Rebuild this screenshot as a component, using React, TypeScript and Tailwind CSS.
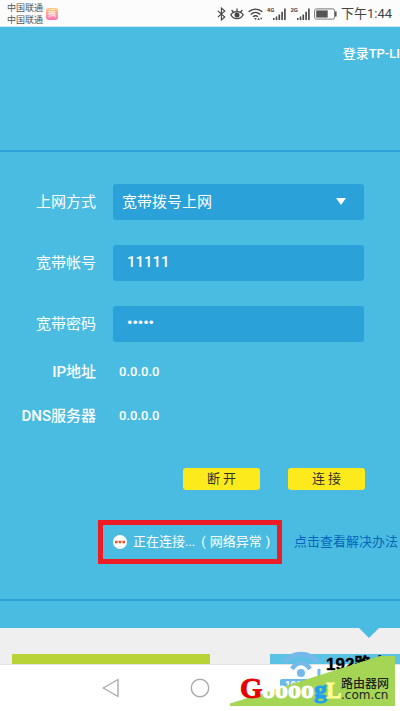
import { useState } from "react";

function BluetoothIcon() {
  return (
    <svg viewBox="0 0 9 14" className="h-3.5 w-[9px]" fill="none" stroke="#444" strokeWidth="1.1">
      <path d="M0.8 3.8 7.8 10 4.4 13V1L7.8 4 0.8 10.2" />
    </svg>
  );
}

function EyeIcon() {
  return (
    <svg viewBox="0 0 14 14" className="size-3.5" fill="none" stroke="#444" strokeWidth="1.3">
      <path d="M0.8 7.8C3.6 3.6 10.4 3.6 13.2 7.8 10.4 13 3.6 13 0.8 7.8Z" />
      <path d="M7 4.5V1.5M3.5 5.2 1.6 3M10.5 5.2 12.4 3" />
      <circle cx="7" cy="8" r="2.5" fill="#444" stroke="none" />
    </svg>
  );
}

function WifiIcon() {
  return (
    <svg viewBox="0 0 15 14" className="h-3.5 w-[15px]" fill="none" stroke="#444" strokeWidth="1.4">
      <path d="M0.6 4.8C4.6 1.2 10.4 1.2 14.4 4.8M2.8 7.4C5.6 4.9 9.4 4.9 12.2 7.4M5 9.8C6.6 8.4 8.4 8.4 10 9.8" />
      <path d="M6.2 11h2.6l-1.3 2ZM9.4 13l1.2-2.2 1.2 2.2ZM12 10.8h2.4l-1.2 2Z" fill="#444" stroke="none" />
    </svg>
  );
}

function SignalIcon({ label }: { label: string }) {
  return (
    <span className="flex items-start">
      <span className="text-[6px] leading-[6px] font-bold">{label}</span>
      <svg viewBox="0 0 13 14" className="-ml-px h-3.5 w-[13px]" fill="#444">
        <path d="M0 11h1.5v2H0ZM2.7 9.5h1.6V13H2.7ZM5.5 7.5h1.6V13H5.5ZM8.3 4.8h1.6V13H8.3ZM11.1 1.5h1.6V13h-1.6Z" />
      </svg>
    </span>
  );
}

function BatteryIcon() {
  return (
    <svg viewBox="0 0 23 12" className="h-3 w-[23px]">
      <rect x="0.6" y="0.9" width="20" height="10.2" rx="1.8" fill="#fff" stroke="#777" strokeWidth="1" />
      <rect x="2.2" y="2.4" width="11.5" height="7.2" fill="#555" />
      <path d="M21 3.5h1.6v5H21Z" fill="#555" />
    </svg>
  );
}

function StatusBar() {
  return (
    <header className="flex h-[27px] items-center justify-between border-b border-[#cfe6ee] bg-[#fcfcfc] pt-0.5 pr-2 pl-[7px] text-[#444]">
      <div className="flex items-center gap-[3px]">
        <div className="text-[9px] leading-3 text-[#555]">
          <p>中国联通</p>
          <p>中国联通</p>
        </div>
        <span className="flex size-3 items-center justify-center rounded-[3px] bg-linear-to-b from-[#ffc96b] to-[#ff6fb5] text-[8px] leading-none text-white">
          搞
        </span>
      </div>
      <div className="flex items-center gap-1">
        <BluetoothIcon />
        <EyeIcon />
        <WifiIcon />
        <SignalIcon label="4G" />
        <SignalIcon label="2G" />
        <BatteryIcon />
        <span className="text-[13px] leading-4">下午1:44</span>
      </div>
    </header>
  );
}

const labelClass = "text-right text-[15px] leading-6 whitespace-nowrap";
const fieldClass = "block h-9 w-full rounded-[3px] bg-[#2ba1da] text-[15px] text-white outline-none";

function DialForm() {
  const [mode, setMode] = useState("pppoe");
  const [account, setAccount] = useState("11111");
  const [password, setPassword] = useState("12345");

  return (
    <form onSubmit={(e) => e.preventDefault()} className="pt-8 pb-[35px]">
      <div className="grid grid-cols-[96px_1fr] items-center gap-x-[17px] gap-y-[25px] pr-9">
        <label htmlFor="mode" className={labelClass}>
          上网方式
        </label>
        <div className="relative">
          <select
            id="mode"
            value={mode}
            onChange={(e) => setMode(e.target.value)}
            className={`${fieldClass} appearance-none px-[9px]`}
          >
            <option value="pppoe">宽带拨号上网</option>
          </select>
          <svg viewBox="0 0 10 7" className="pointer-events-none absolute top-[14px] right-[18px] h-[7px] w-2.5">
            <path d="M0 0h10L5 7Z" fill="#fff" />
          </svg>
        </div>

        <label htmlFor="account" className={labelClass}>
          宽带帐号
        </label>
        <input
          id="account"
          value={account}
          onChange={(e) => setAccount(e.target.value)}
          className={`${fieldClass} px-3.5 pb-0.5 font-medium`}
        />

        <label htmlFor="password" className={labelClass}>
          宽带密码
        </label>
        <input
          id="password"
          type="password"
          value={password}
          onChange={(e) => setPassword(e.target.value)}
          className={`${fieldClass} px-3.5 pb-0.5 font-bold`}
        />
      </div>

      <dl className="mt-[18px] grid grid-cols-[96px_1fr] items-center gap-x-[23px] gap-y-5">
        <dt className={`${labelClass} font-medium`}>IP地址</dt>
        <dd className="text-[13px] leading-6 font-medium">0.0.0.0</dd>
        <dt className={`${labelClass} font-medium`}>DNS服务器</dt>
        <dd className="text-[13px] leading-6 font-medium">0.0.0.0</dd>
      </dl>

      <div className="mt-10 flex justify-end gap-7 pr-[35px] text-[13px] leading-[22px] text-[#333]">
        <button type="button" className="h-[22px] w-[77px] rounded-[3px] bg-[#fcea1c]">
          断 开
        </button>
        <button type="submit" className="h-[22px] w-[77px] rounded-[3px] bg-[#fcea1c]">
          连 接
        </button>
      </div>

      <div className="mt-[30px] flex items-center justify-end gap-3 text-[13px] whitespace-nowrap">
        <p className="flex h-11 w-[184px] items-center gap-1.5 border-5 border-[#ee1c25] pl-2.5">
          <svg viewBox="0 0 14 14" className="size-3.5 shrink-0">
            <circle cx="7" cy="7" r="7" fill="#fff" />
            <path d="M2 5.7h2.6v2.6H2ZM5.7 5.7h2.6v2.6H5.7ZM9.4 5.7h2.6v2.6H9.4Z" fill="#f0501e" />
          </svg>
          <span>正在连接...</span>
          <span className="flex gap-1">
            <span>(</span>
            <span>网络异常</span>
            <span>)</span>
          </span>
        </p>
        <a href="#help" className="pr-0.5 text-[#0564b8]">
          点击查看解决办法
        </a>
      </div>
    </form>
  );
}

function Watermark() {
  return (
    <svg
      viewBox="230 650 170 56"
      className="absolute right-0 bottom-0 h-14 w-[170px]"
      role="img"
      aria-label="192路由器网"
    >
      <g fill="none" stroke="#74b8ec">
        <path d="M285 662C293 651.500 309 651.500 317 662" strokeWidth="5" />
        <path d="M292 669C297 661 305 661 310 669" strokeWidth="4.5" />
        <path d="M319 669v12" strokeWidth="3" />
      </g>
      <circle cx="301" cy="673" r="4" fill="#74b8ec" />
      <rect x="280" y="679" width="42" height="20" rx="2" fill="#6cb8e8" />
      <text x="285" y="689" fontSize="10" fontWeight="700" fill="#fff" fontFamily="Liberation Sans">
        192
      </text>
      <text
        x="326"
        y="670"
        fontSize="17"
        fontWeight="700"
        fill="#000"
        stroke="#000"
        strokeWidth="0.4"
        fontFamily="Liberation Sans, Noto Sans CJK SC, sans-serif"
      >
        192路由
      </text>
      <path d="M230 703.5 380 656H395V706H230Z" fill="#a5d555" />
      <g fontFamily="Liberation Serif, serif" fontWeight="700" strokeWidth="0.9">
        <text x="240" y="698" fontSize="29" fill="#e60000" stroke="#e60000">
          G
        </text>
        <text x="262" y="698" fontSize="26" fill="#fff" stroke="#fff">
          oooo
        </text>
        <text x="314" y="698" fontSize="26" fill="#1e9ff0" stroke="#1e9ff0">
          g
        </text>
        <text x="326" y="698" fontSize="23" fill="#ffff99" stroke="#ffff99">
          L
        </text>
      </g>
      <g fill="#222">
        <text x="341" y="688" fontSize="12" fontWeight="500" fontFamily="Noto Sans CJK SC, sans-serif">
          路由器网
        </text>
        <text x="341" y="699" fontSize="12" fontFamily="DejaVu Sans, sans-serif">
          .com.cn
        </text>
      </g>
    </svg>
  );
}

export default function App() {
  return (
    <div className="min-h-screen bg-white font-['Roboto','Noto_Sans_CJK_SC',sans-serif]">
      <div className="relative overflow-hidden">
        <StatusBar />

        <main className="bg-[#4bbce1] text-white">
          <div className="flex h-[125px] justify-end border-b-2 border-[#2ba1da] pt-[17px] text-[13px] leading-5">
            <a href="#login" className="font-medium whitespace-nowrap">
              登录TP-LI
            </a>
          </div>
          <DialForm />
          <div className="h-[29px] border-t-2 border-[#2ba1da]" />
        </main>

        <section className="relative flex h-9 items-end gap-[60px] bg-[#efefef] pl-3">
          <svg viewBox="0 0 20 10" className="absolute top-0 right-[21px] h-2.5 w-5">
            <path d="M0 0h20L10 10Z" fill="#4bbce1" />
          </svg>
          <div className="h-2.5 w-[198px] bg-[#b8d335]" />
          <div className="h-2.5 flex-1 bg-[#5cc2e4]" />
        </section>

        <nav className="flex h-[42px] items-center justify-center border-t border-[#e2e2e2] bg-white pt-1">
          <div className="flex w-[196px] items-center gap-[70px]">
            <button type="button" aria-label="返回">
              <svg viewBox="0 0 18 20" className="h-5 w-[18px]" fill="none" stroke="#aaa" strokeWidth="1.4">
                <path d="M1.2 10 16 1.5v17Z" strokeLinejoin="round" />
              </svg>
            </button>
            <button type="button" aria-label="主页">
              <svg viewBox="0 0 20 20" className="size-5" fill="none" stroke="#aaa" strokeWidth="1.4">
                <circle cx="10" cy="10" r="8.7" />
              </svg>
            </button>
          </div>
        </nav>

        <Watermark />
      </div>
    </div>
  );
}
